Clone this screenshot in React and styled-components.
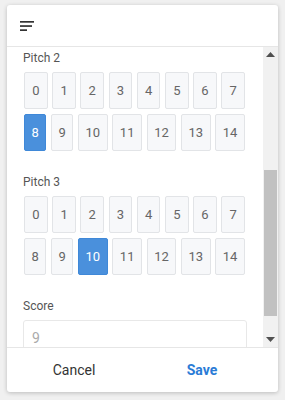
import { useState } from 'react'
import styled, { createGlobalStyle, css } from 'styled-components'

const GlobalStyle = createGlobalStyle`
  html, body { margin: 0; padding: 0; }
  body {
    background: #f0f0f0;
    font-family: Roboto, "Liberation Sans", Arial, sans-serif;
    padding: 5px 7px;
  }
`

const Card = styled.div`
  background: #fff;
  border-radius: 3px;
  box-shadow: 0 1px 4px rgba(0, 0, 0, 0.22);
  display: flex;
  flex-direction: column;
  height: 387px;
  overflow: hidden;
  width: 271px;
`

const Header = styled.div`
  align-items: center;
  border-bottom: 1px solid #e6e6e6;
  display: flex;
  flex: 0 0 auto;
  height: 41px;
  padding-left: 13px;
`

const MenuButton = styled.button`
  background: transparent;
  border: none;
  cursor: pointer;
  display: flex;
  padding: 0;
`

const Body = styled.div`
  display: flex;
  flex: 1 1 auto;
  min-height: 0;
`

const Scroller = styled.div`
  flex: 1 1 auto;
  overflow: hidden;
  padding: 0 16px;
`

const Section = styled.div`
  margin-top: 24px;
  &:first-child { margin-top: 4px; }
`

const Label = styled.div`
  color: #555;
  font-size: 12px;
  line-height: 14px;
  margin-bottom: 7px;
`

const Options = styled.div`
  display: flex;
  flex-wrap: wrap;
  gap: 5px 4.5px;
  margin-left: 1px;
  width: 221px;
`

const Option = styled.button`
  background: #f7f8fa;
  border: 1px solid #e2e4e7;
  border-radius: 2px;
  box-sizing: border-box;
  color: #666;
  cursor: pointer;
  flex: 1 0 auto;
  font-family: inherit;
  font-size: 13px;
  height: 37px;
  min-width: 21px;
  padding: 0 6px;

  ${(p) => p.$active && css`
    background: #4a90dc;
    border-color: #3f88d8;
    color: #fff;
  `}
`

const Input = styled.input`
  border: 1px solid #e8e8e8;
  border-radius: 3px;
  box-sizing: border-box;
  color: #444;
  font-family: inherit;
  font-size: 14px;
  height: 36px;
  outline: none;
  padding: 0 8px;
  width: 100%;

  &::placeholder { color: #aaa; }
`

const Scrollbar = styled.div`
  background: #f1f1f1;
  display: flex;
  flex: 0 0 15px;
  flex-direction: column;
`

const Arrow = styled.div`
  align-items: center;
  display: flex;
  flex: 0 0 15px;
  justify-content: center;
`

const Track = styled.div`
  flex: 1 1 auto;
  padding-top: ${(p) => p.$offset}px;
`

const Thumb = styled.div`
  background: #c1c1c1;
  height: ${(p) => p.$size}px;
  margin: 0 1px;
`

const Footer = styled.div`
  border-top: 1px solid #e6e6e6;
  display: flex;
  flex: 0 0 auto;
  height: 44px;
  padding: 0 12px 0 3px;
`

const Action = styled.button`
  background: transparent;
  border: none;
  color: ${(p) => (p.$primary ? '#2a7bd6' : '#333')};
  cursor: pointer;
  flex: 1 1 0;
  font-family: inherit;
  font-size: 14px;
  font-weight: ${(p) => (p.$primary ? 700 : 400)};
`

const SortIcon = () => (
  <svg width="14" height="10" viewBox="0 0 14 10" fill="#333">
    <rect x="0" y="0" width="14" height="1.7" />
    <rect x="0" y="4.2" width="12" height="1.7" />
    <rect x="0" y="8.3" width="7" height="1.7" />
  </svg>
)

const Triangle = ({ down }) => (
  <svg width="9" height="5" viewBox="0 0 9 5" fill="#505050">
    {down ? <polygon points="0,0 9,0 4.5,5" /> : <polygon points="4.5,0 9,5 0,5" />}
  </svg>
)

const values = Array.from({ length: 15 }, (_, i) => i)

const PitchPicker = ({ label, selected, onSelect }) => (
  <Section>
    <Label>{label}</Label>
    <Options>
      {values.map((v) => (
        <Option key={v} $active={v === selected} onClick={() => onSelect(v)}>
          {v}
        </Option>
      ))}
    </Options>
  </Section>
)

export default function App() {
  const [pitches, setPitches] = useState({ 2: 8, 3: 10 })

  const pick = (key) => (v) => setPitches((prev) => ({ ...prev, [key]: v }))

  return (
    <>
      <GlobalStyle />
      <Card>
        <Header>
          <MenuButton aria-label="Menu">
            <SortIcon />
          </MenuButton>
        </Header>
        <Body>
          <Scroller>
            {Object.keys(pitches).map((key) => (
              <PitchPicker
                key={key}
                label={`Pitch ${key}`}
                selected={pitches[key]}
                onSelect={pick(key)}
              />
            ))}
            <Section>
              <Label>Score</Label>
              <Input placeholder="9" />
            </Section>
          </Scroller>
          <Scrollbar>
            <Arrow><Triangle /></Arrow>
            <Track $offset={108}>
              <Thumb $size={146} />
            </Track>
            <Arrow><Triangle down /></Arrow>
          </Scrollbar>
        </Body>
        <Footer>
          <Action>Cancel</Action>
          <Action $primary>Save</Action>
        </Footer>
      </Card>
    </>
  )
}
